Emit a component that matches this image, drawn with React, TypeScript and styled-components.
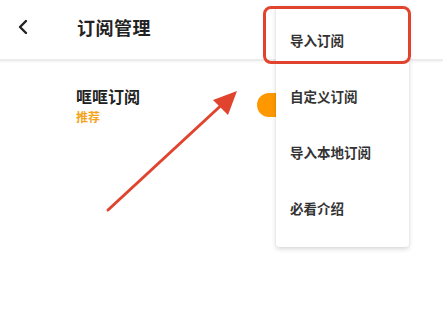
import styled, { createGlobalStyle } from 'styled-components';

const GlobalStyle = createGlobalStyle`
    html, body {
        margin: 0;
        padding: 0;
        background: #ffffff;
    }
    body {
        font-family: 'Noto Sans CJK SC', 'Noto Sans', sans-serif;
        color: #222;
    }
`;

const Screen = styled.div`
    position: relative;
    width: 443px;
    height: 314px;
    overflow: hidden;
    background: #fff;
`;

const Header = styled.div`
    display: flex;
    align-items: center;
    height: 53px;
    padding: 0 0 6px 17px;
    border-bottom: 2px solid #ececec;
    box-shadow: 0 1px 2px rgba(0, 0, 0, 0.05);
`;

const BackButton = styled.div`
    width: 16px;
    height: 24px;
    display: flex;
    align-items: center;
    margin-right: 44px;
`;

const Title = styled.h1`
    margin: 0;
    font-size: 18px;
    font-weight: 700;
    color: #222;
    letter-spacing: 0.5px;
`;

const Row = styled.div`
    display: flex;
    align-items: center;
    justify-content: space-between;
    padding: 24px 0 0 76px;
`;

const RowInfo = styled.div`
    display: flex;
    flex-direction: column;
    gap: 2px;
`;

const RowName = styled.div`
    font-size: 16px;
    font-weight: 700;
    color: #222;
    line-height: 22px;
`;

const RowTag = styled.div`
    font-size: 12px;
    font-weight: 700;
    color: #f6a31b;
    line-height: 16px;
`;

const Switch = styled.div`
    width: 44px;
    height: 24px;
    border-radius: 12px;
    background: #ff9800;
    margin-right: 142px;
`;

const Menu = styled.div`
    position: absolute;
    left: 276px;
    top: 6px;
    width: 133px;
    padding: 6px 0 11px;
    background: #fff;
    border-radius: 3px;
    box-shadow: 0 2px 5px rgba(0, 0, 0, 0.16), 0 0 1px rgba(0, 0, 0, 0.12);
`;

const MenuItem = styled.div`
    height: 56px;
    display: flex;
    align-items: center;
    padding-left: 14px;
    font-size: 13.5px;
    font-weight: 700;
    color: #333;
`;

const Highlight = styled.div`
    position: absolute;
    left: 263px;
    top: 6px;
    width: 142px;
    height: 52px;
    border: 3px solid #e0442e;
    border-radius: 8px;
`;

const Annotation = styled.svg`
    position: absolute;
    left: 0;
    top: 0;
    pointer-events: none;
`;

const menuItems = ['导入订阅', '自定义订阅', '导入本地订阅', '必看介绍'];

const App = () => {
    return (
        <Screen>
            <GlobalStyle />
            <Header>
                <BackButton>
                    <svg width="12" height="16" viewBox="0 0 12 16">
                        <path d="M9 2 L3 8 L9 14" fill="none" stroke="#222" strokeWidth="2.4" strokeLinecap="round" strokeLinejoin="round" />
                    </svg>
                </BackButton>
                <Title>订阅管理</Title>
            </Header>
            <Row>
                <RowInfo>
                    <RowName>哐哐订阅</RowName>
                    <RowTag>推荐</RowTag>
                </RowInfo>
                <Switch />
            </Row>
            <Menu>
                {menuItems.map((item) => (
                    <MenuItem key={item}>{item}</MenuItem>
                ))}
            </Menu>
            <Highlight />
            <Annotation width="443" height="314">
                <line x1="108" y1="210" x2="228" y2="99" stroke="#e0442e" strokeWidth="3" strokeLinecap="round" />
                <polygon points="237,91 213,100 228,115" fill="#e0442e" />
            </Annotation>
        </Screen>
    );
};

export default App;
